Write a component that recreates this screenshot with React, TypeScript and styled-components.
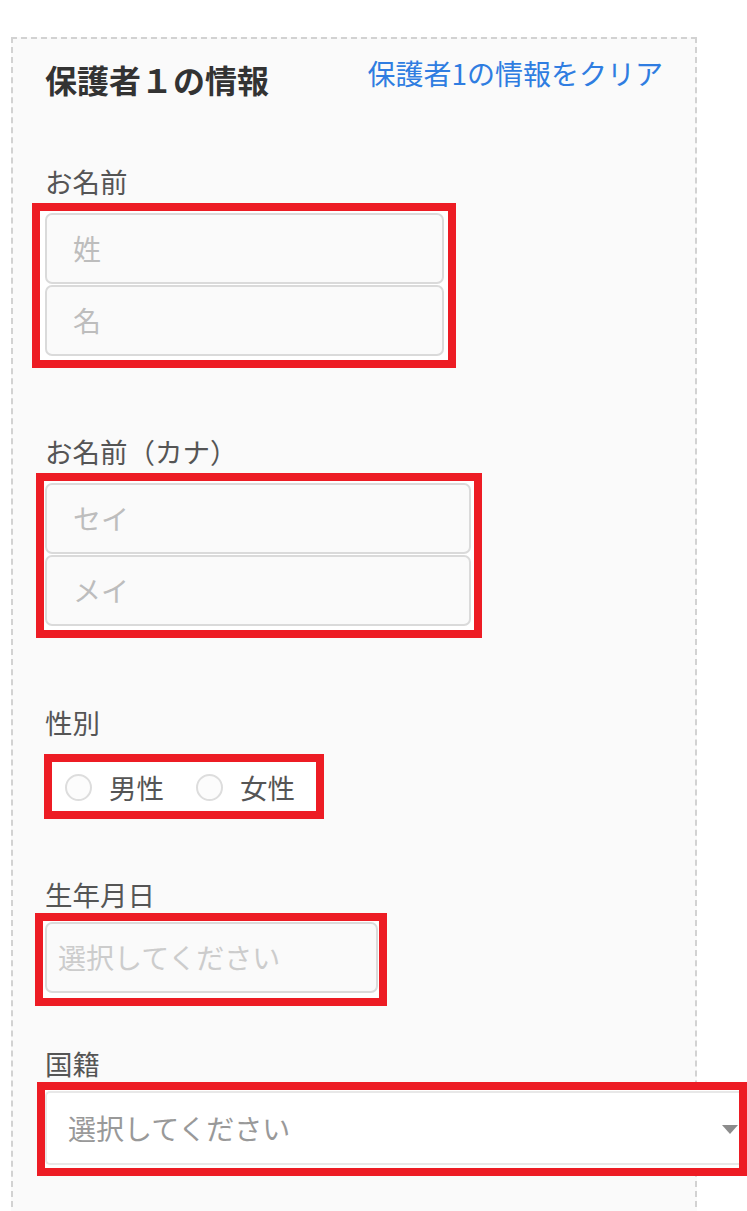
import styled, { createGlobalStyle } from 'styled-components';

const GlobalStyle = createGlobalStyle`
  html, body {
    margin: 0;
    padding: 0;
    background: #ffffff;
    overflow: hidden;
  }
  body {
    font-family: "Noto Sans CJK JP", "Noto Sans", sans-serif;
    color: #555555;
  }
  * {
    box-sizing: border-box;
  }
`;

const Panel = styled.section`
  margin: 37px 0 0 11px;
  width: 686px;
  min-height: 1180px;
  border: 2px dashed #d2d2d2;
  border-bottom: none;
  background: #fafafa;
  padding: 15px 32px 0;
`;

const Header = styled.header`
  display: flex;
  justify-content: space-between;
  align-items: flex-start;
`;

const Title = styled.h2`
  margin: 3px 0 0;
  font-size: 32px;
  line-height: 1.4;
  font-weight: 700;
  color: #333333;
`;

const ClearLink = styled.a`
  font-size: 28px;
  line-height: 38px;
  color: #2f7de1;
  text-decoration: none;
  cursor: pointer;
`;

const FieldBlock = styled.div<{ $top: number }>`
  margin-top: ${p => p.$top}px;
`;

const Label = styled.div<{ $gap: number }>`
  font-size: 27.5px;
  line-height: 38px;
  color: #555555;
  margin-bottom: ${p => p.$gap}px;
`;

// red annotation frame drawn around each control
const Highlight = styled.div<{ $shift: number; $width: number; $pad: string }>`
  margin-left: ${p => -p.$shift}px;
  width: ${p => p.$width}px;
  border: 8px solid #ed1c24;
  background: #ffffff;
  padding: ${p => p.$pad};
  display: flex;
  flex-direction: column;
  gap: 1px;
`;

const TextInput = styled.input<{ $indent: number; $tone: string }>`
  display: block;
  width: 100%;
  height: 71px;
  border: 2px solid #dadada;
  border-radius: 7px;
  background: #fafafa;
  padding: 0 12px 0 ${p => p.$indent}px;
  font-family: inherit;
  font-size: 28px;
  color: #333333;
  outline: none;
  &::placeholder {
    color: ${p => p.$tone};
  }
`;

const RadioRow = styled.div`
  display: flex;
  flex-direction: row;
  align-items: center;
  gap: 32px;
  height: 49px;
  padding-top: 2px;
  white-space: nowrap;
`;

const RadioItem = styled.label`
  display: flex;
  align-items: center;
  gap: 17px;
  flex-shrink: 0;
  font-size: 27.5px;
  line-height: 1;
  color: #555555;
`;

const RadioCircle = styled.span`
  flex-shrink: 0;
  width: 27px;
  height: 27px;
  border-radius: 50%;
  border: 2px solid #dddddd;
  background: #fcfcfc;
`;

const SelectBox = styled.div`
  position: relative;
  display: flex;
  align-items: center;
  width: 100%;
  height: 74px;
  border: 2px solid #e8e8e8;
  border-right: none;
  border-radius: 5px 0 0 5px;
  background: #ffffff;
  padding-left: 21px;
  font-size: 28px;
  color: #999999;
`;

const Caret = styled.span`
  position: absolute;
  right: 1px;
  top: 32px;
  width: 0;
  height: 0;
  border-left: 8px solid transparent;
  border-right: 8px solid transparent;
  border-top: 9px solid #8c8c8c;
`;

export default function App() {
  return (
    <>
      <GlobalStyle />
      <Panel>
        <Header>
          <Title>保護者１の情報</Title>
          <ClearLink>保護者1の情報をクリア</ClearLink>
        </Header>

        <FieldBlock $top={60}>
          <Label $gap={3}>お名前</Label>
          <Highlight $shift={13} $width={424} $pad="2px 4px 4px 5px">
            <TextInput $indent={26} $tone="#bdbdbd" placeholder="姓" />
            <TextInput $indent={26} $tone="#bdbdbd" placeholder="名" />
          </Highlight>
        </FieldBlock>

        <FieldBlock $top={64}>
          <Label $gap={3}>お名前（カナ）</Label>
          <Highlight $shift={9} $width={446} $pad="2px 3px 4px 1px">
            <TextInput $indent={26} $tone="#bdbdbd" placeholder="セイ" />
            <TextInput $indent={26} $tone="#bdbdbd" placeholder="メイ" />
          </Highlight>
        </FieldBlock>

        <FieldBlock $top={65}>
          <Label $gap={13}>性別</Label>
          <Highlight $shift={1} $width={280} $pad="0 20px 0 13px">
            <RadioRow>
              <RadioItem>
                <RadioCircle />
                男性
              </RadioItem>
              <RadioItem>
                <RadioCircle />
                女性
              </RadioItem>
            </RadioRow>
          </Highlight>
        </FieldBlock>

        <FieldBlock $top={56}>
          <Label $gap={0}>生年月日</Label>
          <Highlight $shift={10} $width={352} $pad="1px 1px 5px 2px">
            <TextInput $indent={11} $tone="#cccccc" placeholder="選択してください" />
          </Highlight>
        </FieldBlock>

        <FieldBlock $top={38}>
          <Label $gap={0}>国籍</Label>
          <Highlight $shift={8} $width={710} $pad="1px 0 3px 0">
            <SelectBox>
              選択してください
              <Caret />
            </SelectBox>
          </Highlight>
        </FieldBlock>
      </Panel>
    </>
  );
}
